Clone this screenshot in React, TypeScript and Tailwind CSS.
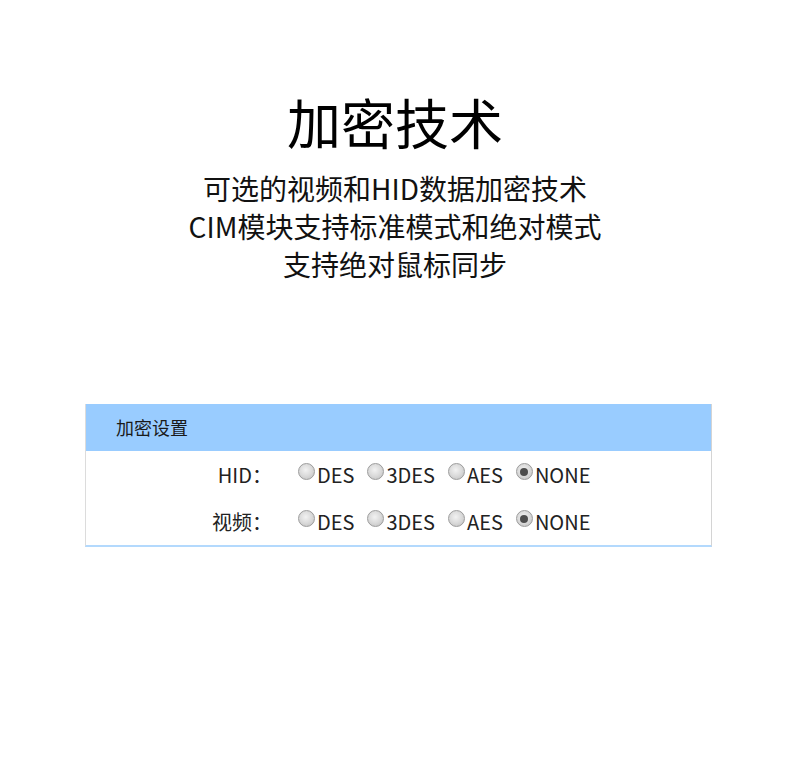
import React from "react";

const cjk = "font-['Noto_Sans_CJK_SC','Noto_Sans',sans-serif]";

const options = ["DES", "3DES", "AES", "NONE"];

function Radio({ checked }: { checked: boolean }) {
  return (
    <span className="relative mr-[2px] inline-block size-[17px] shrink-0 -translate-y-[3px] rounded-full border border-[#9c9c9c] bg-[radial-gradient(circle_at_45%_40%,#f2f2f2_0%,#dadada_50%,#bcbcbc_100%)]">
      {checked && (
        <span className="absolute left-1/2 top-1/2 size-[8px] -translate-x-1/2 -translate-y-1/2 rounded-full bg-[#4d4d4d]" />
      )}
    </span>
  );
}

function Row({ label }: { label: string }) {
  return (
    <div className="flex h-[47px] items-center">
      <div className="w-[186px] text-right">{label}</div>
      <div className="ml-[26px] flex items-center gap-[13px]">
        {options.map((o) => (
          <label key={o} className="flex items-center">
            <Radio checked={o === "NONE"} />
            <span>{o}</span>
          </label>
        ))}
      </div>
    </div>
  );
}

export default function App() {
  return (
    <div className={`min-h-[763px] w-[790px] bg-white text-black ${cjk}`}>
      {/* ── Heading ── */}
      <div className="flex flex-col items-center pt-[84px]">
        <h1 className="text-[54px] leading-[76px] font-normal">加密技术</h1>
        <div className="mt-[9px] text-center text-[28px] leading-[38px] text-[#111]">
          <p>可选的视频和HID数据加密技术</p>
          <p>CIM模块支持标准模式和绝对模式</p>
          <p>支持绝对鼠标同步</p>
        </div>
      </div>

      {/* ── Settings panel ── */}
      <div className="ml-[85px] mt-[121px] w-[627px] border-r border-b-2 border-l border-r-[#d4d4d4] border-b-[#b3d9fd] border-l-[#dcdcdc] text-[20px] text-[#222]">
        <div className="flex h-[47px] items-center bg-[#99ccff] pl-[30px] text-[18px] text-[#1a1a1a]">
          加密设置
        </div>
        <Row label="HID：" />
        <Row label="视频：" />
      </div>
    </div>
  );
}
